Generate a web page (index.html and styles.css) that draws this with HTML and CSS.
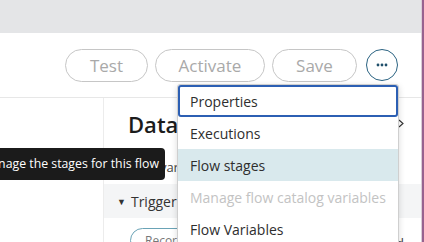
FILE: index.html
```html
<!DOCTYPE html>
<html lang="en">
<head>
    <meta charset="UTF-8">
    <meta name="viewport" content="width=device-width, initial-scale=1.0">
    <title>Flow designer</title>
    <link rel="stylesheet" href="styles.css">
</head>
<body>
    <div class="app">
        <div class="topbar"></div>
        <div class="toolbar">
            <button class="pill-btn btn-test">Test</button>
            <button class="pill-btn btn-activate">Activate</button>
            <button class="pill-btn btn-save">Save</button>
            <button class="more-btn" aria-label="More actions">
                <svg width="12" height="4" viewBox="0 0 12 4">
                    <circle cx="2" cy="2" r="1.4" fill="#1f4f6b"/>
                    <circle cx="6" cy="2" r="1.4" fill="#1f4f6b"/>
                    <circle cx="10" cy="2" r="1.4" fill="#1f4f6b"/>
                </svg>
            </button>
        </div>
        <div class="content">
            <div class="left-panel"></div>
            <div class="right-panel">
                <div class="panel-head">
                    <h2>Data Mapping</h2>
                    <svg class="chevron" width="6" height="9" viewBox="0 0 6 9">
                        <path d="M1 1 L5 4.5 L1 8" fill="none" stroke="#333" stroke-width="1.1"/>
                    </svg>
                </div>
                <div class="var-row">Data variables</div>
                <div class="trigger-row"><span class="caret">&#9660;</span> Trigger - Record Created</div>
                <div class="record-row">
                    <span class="record-pill">Record</span>
                    <span class="record-end">Added</span>
                </div>
            </div>
        </div>

        <div class="tooltip">Manage the stages for this flow</div>

        <ul class="menu">
            <li class="menu-item focused">Properties</li>
            <li class="menu-item">Executions</li>
            <li class="menu-item hover">Flow stages</li>
            <li class="menu-item disabled">Manage flow catalog variables</li>
            <li class="menu-item">Flow Variables</li>
        </ul>
    </div>
    <div class="frame-edge"></div>
</body>
</html>
```

FILE: styles.css
```css
* {
    margin: 0;
    padding: 0;
    box-sizing: border-box;
    font-family: 'Open Sans', 'Noto Sans', sans-serif;
}

body {
    width: 424px;
    height: 242px;
    overflow: hidden;
    display: flex;
    background-color: #fff;
}

.app {
    flex: 1;
    display: flex;
    flex-direction: column;
    position: relative;
    overflow: hidden;
}

.frame-edge {
    width: 3px;
    flex-shrink: 0;
    background-color: #98628f;
    border-left: 1px solid #d9cdd7;
}

.topbar {
    height: 33px;
    flex-shrink: 0;
    background-color: #e4e5e7;
}

.toolbar {
    height: 65px;
    flex-shrink: 0;
    border-bottom: 1px solid #e7e7e7;
    display: flex;
    justify-content: flex-end;
    align-items: center;
    gap: 7px;
    padding-right: 23px;
}

.pill-btn {
    height: 33px;
    border: 1px solid #c6c6c6;
    border-radius: 17px;
    background-color: #fff;
    color: #a9a9a9;
    font-size: 17px;
}

.btn-test {
    width: 83px;
}

.btn-activate {
    width: 110px;
}

.btn-save {
    width: 85px;
}

.more-btn {
    width: 32px;
    height: 32px;
    margin-left: 2px;
    border: 1px solid #2b6382;
    border-radius: 50%;
    background-color: #fff;
    display: flex;
    justify-content: center;
    align-items: center;
}

.content {
    flex: 1;
    min-height: 0;
    display: flex;
}

.left-panel {
    width: 104px;
    border-right: 1px solid #ececec;
}

.right-panel {
    flex: 1;
    display: flex;
    flex-direction: column;
}

.panel-head {
    height: 51px;
    flex-shrink: 0;
    display: flex;
    align-items: center;
    justify-content: space-between;
    padding: 0 17px 0 24px;
}

.panel-head h2 {
    font-size: 22px;
    font-weight: 600;
    color: #1c1c1c;
    white-space: nowrap;
}

.var-row {
    height: 35px;
    flex-shrink: 0;
    display: flex;
    align-items: center;
    padding-left: 24px;
    font-size: 13px;
    color: #444;
}

.trigger-row {
    height: 34px;
    flex-shrink: 0;
    background-color: #f4f5f6;
    display: flex;
    align-items: center;
    padding-left: 13px;
    font-size: 14px;
    color: #333;
    white-space: nowrap;
}

.caret {
    font-size: 9px;
    margin-right: 5px;
}

.record-row {
    flex: 1;
    display: flex;
    justify-content: space-between;
    align-items: flex-start;
    padding: 10px 17px 0 26px;
}

.record-pill {
    border: 1px solid #6aa3b6;
    border-radius: 14px;
    padding: 3px 14px;
    font-size: 12px;
    color: #777;
}

.record-end {
    font-size: 13px;
    color: #444;
    margin-top: 6px;
}

.tooltip {
    position: absolute;
    top: 148px;
    right: 256px;
    height: 32px;
    padding: 0 6px 0 10px;
    background-color: #1b1b1b;
    border-radius: 4px;
    color: #fff;
    font-size: 12.3px;
    font-weight: 500;
    line-height: 32px;
    white-space: nowrap;
}

.menu {
    position: absolute;
    top: 84px;
    left: 177px;
    width: 222px;
    list-style: none;
    background-color: #fff;
    border: 1px solid #cfcfcf;
    border-radius: 3px;
    box-shadow: 0 2px 6px rgba(0, 0, 0, 0.15);
}

.menu-item {
    height: 32px;
    padding-left: 12px;
    display: flex;
    align-items: center;
    font-size: 14px;
    color: #2e2e2e;
    white-space: nowrap;
}

.menu-item.focused {
    border: 2px solid #2c5fb3;
    border-radius: 3px;
    padding-left: 10px;
}

.menu-item.hover {
    background-color: #d9e9ed;
}

.menu-item.disabled {
    color: #c3c3c3;
}
```
